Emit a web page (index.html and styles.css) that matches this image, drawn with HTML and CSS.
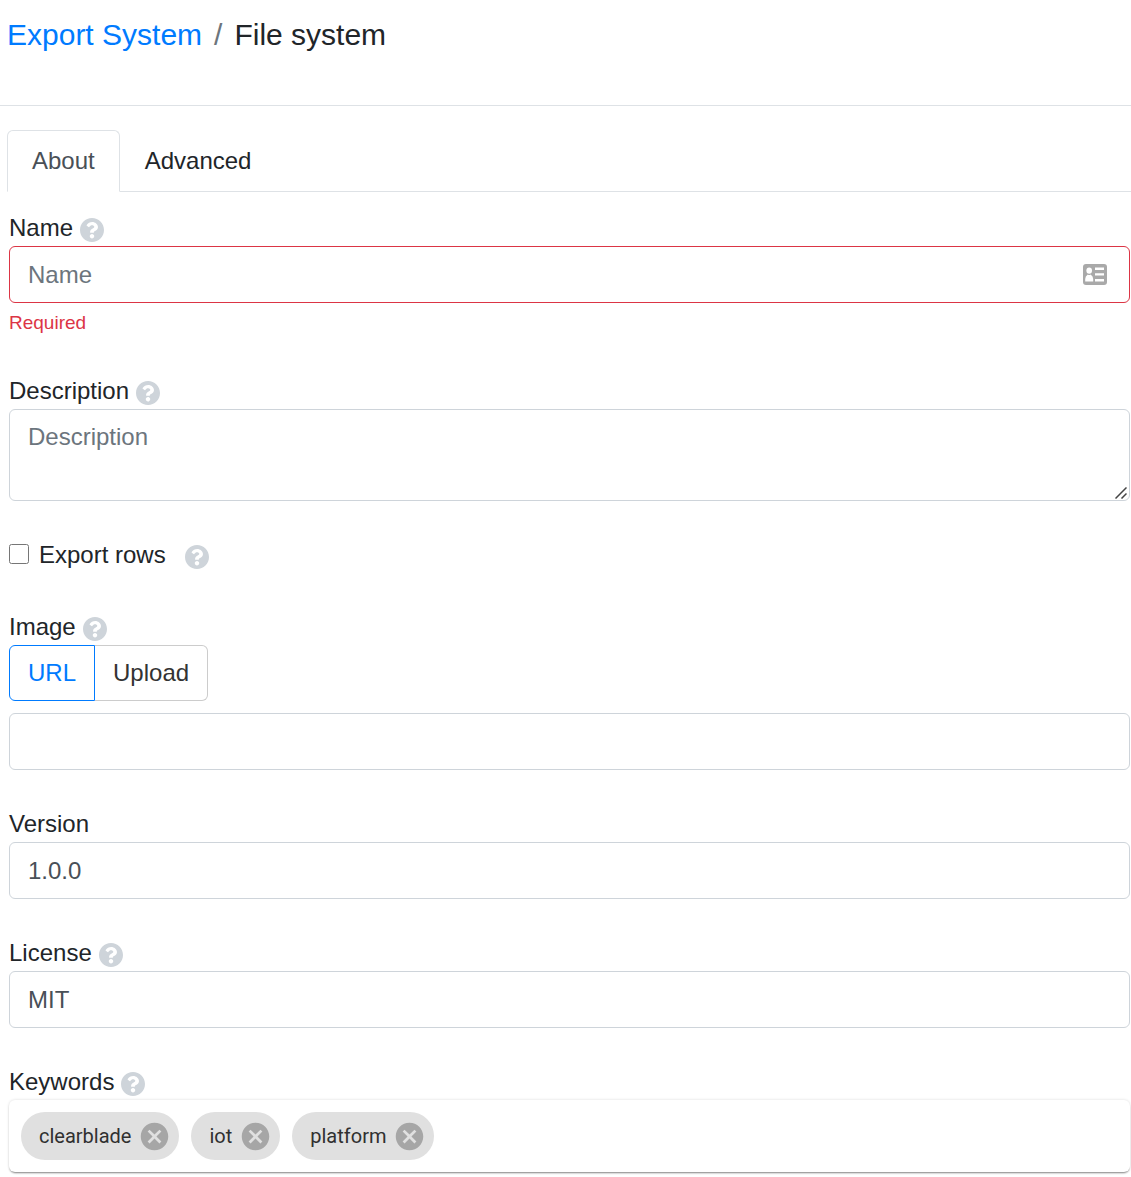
FILE: index.html
```html
<!DOCTYPE html>
<html lang="en">
<head>
<meta charset="utf-8">
<meta name="viewport" content="width=device-width, initial-scale=1">
<title>Export System / File system</title>
<link rel="stylesheet" href="styles.css">
</head>
<body>
<svg class="sprite" aria-hidden="true">
  <symbol id="icon-help" viewBox="8 8 496 496">
    <path d="M504 256c0 136.997-111.043 248-248 248S8 392.997 8 256C8 119.083 119.043 8 256 8s248 111.083 248 248zM262.655 90c-54.497 0-89.255 22.957-116.549 63.758-3.536 5.286-2.353 12.415 2.715 16.258l34.699 26.31c5.205 3.947 12.621 3.008 16.665-2.122 17.864-22.658 30.113-35.797 57.303-35.797 20.429 0 45.698 13.148 45.698 32.958 0 14.976-12.363 22.667-32.534 33.976C247.128 238.528 216 254.941 216 296v4c0 6.627 5.373 12 12 12h56c6.627 0 12-5.373 12-12v-1.333c0-28.462 83.186-29.647 83.186-106.667 0-58.002-60.165-102-116.531-102zM256 338c-25.365 0-46 20.635-46 46 0 25.364 20.635 46 46 46s46-20.636 46-46c0-25.364-20.635-46-46-46z"/>
  </symbol>
  <symbol id="icon-cancel" viewBox="0 0 24 24">
    <path d="M12 2C6.47 2 2 6.47 2 12s4.47 10 10 10 10-4.47 10-10S17.53 2 12 2zm5 13.59L15.59 17 12 13.41 8.41 17 7 15.59 10.59 12 7 8.41 8.41 7 12 10.59 15.59 7 17 8.41 13.41 12 17 15.59z"/>
  </symbol>
</svg>

<header class="page-header">
  <nav class="breadcrumb" aria-label="Breadcrumb">
    <a class="breadcrumb-link" href="#">Export System</a>
    <span class="breadcrumb-separator">/</span>
    <span>File system</span>
  </nav>
</header>

<nav class="tabs" aria-label="Sections">
  <a class="tab tab-active" href="#about" aria-current="page">About</a>
  <a class="tab" href="#advanced">Advanced</a>
</nav>

<form class="form" id="about">
  <div class="field">
    <div class="field-heading">
      <label for="name">Name</label>
      <svg class="help-icon" role="img" aria-label="Help"><use href="#icon-help"/></svg>
    </div>
    <div class="control-wrap">
      <input class="control control-invalid" id="name" type="text" placeholder="Name" aria-describedby="name-error">
      <svg class="contact-icon" viewBox="0 0 24 21" aria-hidden="true">
        <rect width="24" height="21" rx="3" fill="#a9a9a9"/>
        <g fill="#fff">
          <ellipse cx="6.200" cy="6.600" rx="2.800" ry="3.200"/>
          <path d="M2.200 17.500v-2.500q0-3 2.600-4.500q1.400 1 2.800 0q2.600 1.500 2.600 4.500v2.500z"/>
          <path d="M12 3.500h9v2.500h-9zM12 9.300h9v2.300h-9zM12 15h9v2.500h-9z"/>
        </g>
      </svg>
    </div>
    <p class="error" id="name-error">Required</p>
  </div>

  <div class="field">
    <div class="field-heading">
      <label for="description">Description</label>
      <svg class="help-icon" role="img" aria-label="Help"><use href="#icon-help"/></svg>
    </div>
    <div class="control-wrap">
      <textarea class="control control-multiline" id="description" rows="2" placeholder="Description"></textarea>
      <svg class="resize-grip" viewBox="0 0 12 12" aria-hidden="true"><path d="M.5 11.5l11-11M6.500 11.500l5-5"/></svg>
    </div>
  </div>

  <div class="field check-row">
    <input class="checkbox" id="export-rows" type="checkbox">
    <label for="export-rows">Export rows</label>
    <svg class="help-icon check-help" role="img" aria-label="Help"><use href="#icon-help"/></svg>
  </div>

  <div class="field">
    <div class="field-heading">
      <label for="image-url">Image</label>
      <svg class="help-icon" role="img" aria-label="Help"><use href="#icon-help"/></svg>
    </div>
    <div class="button-group">
      <button class="button button-active" type="button" aria-pressed="true">URL</button>
      <button class="button" type="button" aria-pressed="false">Upload</button>
    </div>
    <input class="control" id="image-url" type="text">
  </div>

  <div class="field">
    <div class="field-heading"><label for="version">Version</label></div>
    <input class="control" id="version" type="text" value="1.0.0">
  </div>

  <div class="field">
    <div class="field-heading">
      <label for="license">License</label>
      <svg class="help-icon" role="img" aria-label="Help"><use href="#icon-help"/></svg>
    </div>
    <input class="control" id="license" type="text" value="MIT">
  </div>

  <div class="field">
    <div class="field-heading">
      <span id="keywords-label">Keywords</span>
      <svg class="help-icon" role="img" aria-label="Help"><use href="#icon-help"/></svg>
    </div>
    <ul class="chips" aria-labelledby="keywords-label">
      <li class="chip">clearblade<button class="chip-remove" type="button" aria-label="Remove clearblade"><svg class="chip-icon"><use href="#icon-cancel"/></svg></button></li>
      <li class="chip">iot<button class="chip-remove" type="button" aria-label="Remove iot"><svg class="chip-icon"><use href="#icon-cancel"/></svg></button></li>
      <li class="chip">platform<button class="chip-remove" type="button" aria-label="Remove platform"><svg class="chip-icon"><use href="#icon-cancel"/></svg></button></li>
    </ul>
  </div>
</form>
</body>
</html>
```

FILE: styles.css
```css
*,
*::before,
*::after {
  box-sizing: border-box;
}

body {
  margin: 0;
  background: #fff;
  color: #212529;
  font-family: "Liberation Sans", Arial, sans-serif;
  font-size: 24px;
  line-height: 36px;
}

.sprite {
  display: none;
}

.page-header {
  padding: 12px 7px 48px;
  border-bottom: 1px solid #dee2e6;
}

.breadcrumb {
  display: flex;
  gap: 12px;
  font-size: 30px;
  line-height: 45px;
}

.breadcrumb-link {
  color: #007bff;
  text-decoration: none;
}

.breadcrumb-separator {
  color: #6c757d;
}

.tabs {
  display: flex;
  margin: 24px 0 0 7px;
  border-bottom: 1px solid #dee2e6;
}

.tab {
  margin-bottom: -1px;
  padding: 12px 24px;
  border: 1px solid transparent;
  border-radius: 6px 6px 0 0;
  color: #212529;
  text-decoration: none;
}

.tab-active {
  border-color: #dee2e6 #dee2e6 #fff;
  background: #fff;
  color: #495057;
}

.form {
  display: flex;
  flex-direction: column;
  gap: 36px;
  padding: 18px 1px 4px 9px;
}

.field-heading {
  display: flex;
  align-items: center;
  gap: 7px;
}

.help-icon {
  width: 24px;
  height: 24px;
  margin-top: 4px;
  fill: #ced4da;
}

.control-wrap {
  position: relative;
}

.control {
  display: block;
  width: 100%;
  height: 57px;
  margin: 0;
  padding: 9px 18px;
  border: 1px solid #ced4da;
  border-radius: 6px;
  background: #fff;
  color: #495057;
  font: inherit;
}

.control::placeholder {
  color: #6c757d;
  opacity: 1;
}

.control-invalid {
  padding-right: 60px;
  border-color: #dc3545;
}

.control-multiline {
  height: auto;
  resize: vertical;
}

.control-multiline::-webkit-resizer {
  display: none;
}

.contact-icon {
  position: absolute;
  top: 18px;
  right: 23px;
  width: 24px;
  height: 21px;
}

.resize-grip {
  position: absolute;
  right: 3px;
  bottom: 2px;
  width: 12px;
  height: 12px;
  fill: none;
  stroke: #444;
  stroke-width: 1.5;
  pointer-events: none;
}

.error {
  margin: 6px 0 0;
  color: #dc3545;
  font-size: 19px;
  line-height: 28px;
}

.check-row {
  display: flex;
  align-items: center;
}

.checkbox {
  width: 20px;
  height: 20px;
  margin: 0 10px 2px 0;
}

.check-help {
  margin-left: 19px;
}

.button-group {
  display: flex;
  margin-bottom: 12px;
}

.button {
  margin: 0;
  padding: 9px 18px;
  border: 1px solid #ccc;
  border-left: 0;
  border-radius: 0 6px 6px 0;
  background: #fff;
  color: #333;
  font: inherit;
}

.button-active {
  border: 1px solid #007bff;
  border-radius: 6px 0 0 6px;
  color: #007bff;
}

.chips {
  display: flex;
  flex-wrap: wrap;
  gap: 12px;
  margin: 0;
  padding: 12px;
  border-radius: 6px;
  background: #fff;
  box-shadow: 0 2px 2px -1px rgba(0, 0, 0, 0.45), 0 0 3px rgba(0, 0, 0, 0.15);
  list-style: none;
}

.chip {
  display: flex;
  align-items: center;
  gap: 7px;
  height: 48px;
  padding: 0 8px 0 18px;
  border-radius: 24px;
  background: #e0e0e0;
  color: #303030;
  font-family: Roboto, sans-serif;
  font-size: 20px;
}

.chip-remove {
  display: flex;
  padding: 0;
  border: 0;
  background: none;
}

.chip-icon {
  width: 33px;
  height: 33px;
  fill: #a6a6a6;
}
```
